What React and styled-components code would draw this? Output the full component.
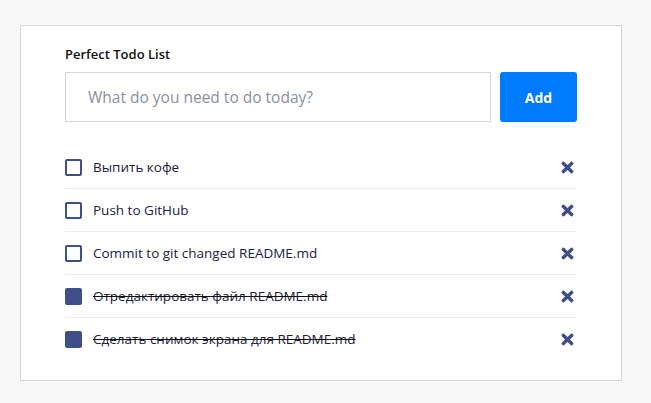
import React, { useState } from "react";
import styled, { createGlobalStyle } from "styled-components";

const GlobalStyle = createGlobalStyle`
  body {
    margin: 0;
    background: #f8f8f8;
    font-family: "Open Sans", "Noto Sans", sans-serif;
  }
`;

const Page = styled.div`
  padding: 25px 20px;
`;

const Card = styled.div`
  box-sizing: border-box;
  width: 602px;
  background: #fff;
  border: 1px solid #d6d4e0;
  padding: 19px 44px 19px 44px;
`;

const Title = styled.h1`
  margin: 0 0 9px;
  font-size: 13px;
  line-height: 18px;
  font-weight: 600;
  color: #111;
`;

const Form = styled.form`
  display: flex;
  gap: 9px;
  margin-bottom: 24px;
`;

const Input = styled.input`
  flex: 1;
  box-sizing: border-box;
  height: 50px;
  border: 1px solid #d3d5dd;
  padding: 0 22px;
  font-family: inherit;
  font-size: 15.5px;
  color: #333;
  outline: none;
  &::placeholder {
    color: #8a91a0;
  }
`;

const AddButton = styled.button`
  width: 77px;
  height: 50px;
  border: none;
  border-radius: 3px;
  background: #007bff;
  color: #fff;
  font-family: inherit;
  font-size: 14px;
  font-weight: 700;
`;

const List = styled.ul`
  list-style: none;
  margin: 0;
  padding: 0;
`;

const Row = styled.li`
  display: flex;
  align-items: center;
  height: 42px;
  border-bottom: 1px solid ${(p) => (p.$last ? "transparent" : "#ececf0")};
`;

const Box = styled.span`
  box-sizing: border-box;
  width: 17px;
  height: 17px;
  border: 2px solid #3f4f8a;
  border-radius: 2px;
  background: ${(p) => (p.$checked ? "#3f4f8a" : "#fff")};
  margin-right: 11px;
  flex-shrink: 0;
`;

const Label = styled.span`
  flex: 1;
  font-size: 13.5px;
  color: #1b2140;
  text-decoration: ${(p) => (p.$done ? "line-through" : "none")};
  text-decoration-color: #111;
`;

const Remove = styled.button`
  border: none;
  background: none;
  padding: 0 3px 0 0;
  display: flex;
  align-items: center;
`;

const CrossIcon = () => (
  <svg width="13" height="13" viewBox="0 0 13 13">
    <path
      d="M2.4 2.4 L10.6 10.6 M10.6 2.4 L2.4 10.6"
      stroke="#3f4f8a"
      strokeWidth="3.5"
      strokeLinecap="round"
    />
  </svg>
);

const initial = [
  { text: "Выпить кофе", done: false },
  { text: "Push to GitHub", done: false },
  { text: "Commit to git changed README.md", done: false },
  { text: "Отредактировать файл README.md", done: true },
  { text: "Сделать снимок экрана для README.md", done: true },
];

export default function App() {
  const [todos] = useState(initial);
  return (
    <>
      <GlobalStyle />
      <Page>
        <Card>
          <Title>Perfect Todo List</Title>
          <Form onSubmit={(e) => e.preventDefault()}>
            <Input placeholder="What do you need to do today?" />
            <AddButton type="submit">Add</AddButton>
          </Form>
          <List>
            {todos.map((t, i) => (
              <Row key={i} $last={i === todos.length - 1}>
                <Box $checked={t.done} />
                <Label $done={t.done}>{t.text}</Label>
                <Remove>
                  <CrossIcon />
                </Remove>
              </Row>
            ))}
          </List>
        </Card>
      </Page>
    </>
  );
}
